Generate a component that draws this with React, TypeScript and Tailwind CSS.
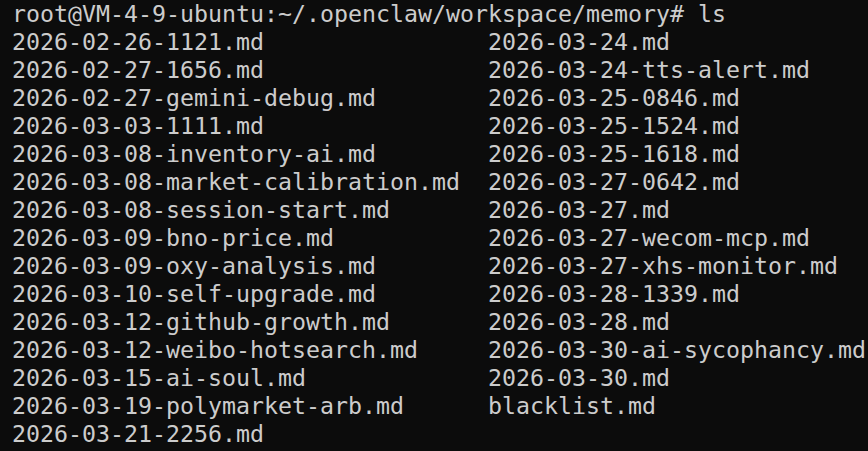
const left: string[] = [
  "2026-02-26-1121.md",
  "2026-02-27-1656.md",
  "2026-02-27-gemini-debug.md",
  "2026-03-03-1111.md",
  "2026-03-08-inventory-ai.md",
  "2026-03-08-market-calibration.md",
  "2026-03-08-session-start.md",
  "2026-03-09-bno-price.md",
  "2026-03-09-oxy-analysis.md",
  "2026-03-10-self-upgrade.md",
  "2026-03-12-github-growth.md",
  "2026-03-12-weibo-hotsearch.md",
  "2026-03-15-ai-soul.md",
  "2026-03-19-polymarket-arb.md",
  "2026-03-21-2256.md",
];

const right: string[] = [
  "2026-03-24.md",
  "2026-03-24-tts-alert.md",
  "2026-03-25-0846.md",
  "2026-03-25-1524.md",
  "2026-03-25-1618.md",
  "2026-03-27-0642.md",
  "2026-03-27.md",
  "2026-03-27-wecom-mcp.md",
  "2026-03-27-xhs-monitor.md",
  "2026-03-28-1339.md",
  "2026-03-28.md",
  "2026-03-30-ai-sycophancy.md",
  "2026-03-30.md",
  "blacklist.md",
  "",
];

export default function App() {
  return (
    <div className="w-[868px] h-[451px] overflow-hidden bg-[#0c0c0c] text-[#cccccc] pl-3 font-['DejaVu_Sans_Mono',monospace] text-[23.25px] leading-[28px] whitespace-pre">
      <div>root@VM-4-9-ubuntu:~/.openclaw/workspace/memory# ls</div>
      {/* ls output, two columns of 34 cells */}
      <div className="grid grid-cols-[476px_1fr]">
        {left.map((name, i) => (
          <div className="contents" key={i}>
            <div>{name}</div>
            <div>{right[i]}</div>
          </div>
        ))}
      </div>
    </div>
  );
}
